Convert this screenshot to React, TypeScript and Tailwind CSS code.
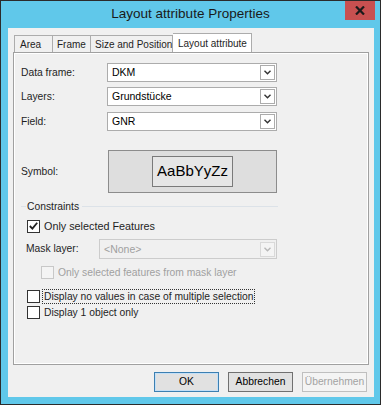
import React from 'react';

const font = { fontFamily: '"Liberation Sans", Arial, sans-serif' };

function Combo({ value, disabled, className }: { value: string; disabled?: boolean; className: string }) {
  return (
    <div
      className={`flex items-center justify-between border ${
        disabled ? 'border-[#cccccc] bg-[#f0f0f0] text-[#a0a0a0]' : 'border-[#acacac] bg-white text-black'
      } ${className}`}
    >
      <span className="pl-[4px] text-[10.5px] leading-none">{value}</span>
      <div
        className={`mr-[1px] flex h-[15px] w-[15px] items-center justify-center border ${
          disabled ? 'border-[#d9d9d9] bg-[#f4f4f4]' : 'border-[#acacac] bg-white'
        }`}
      >
        <svg width="7" height="5" viewBox="0 0 7 5">
          <path d="M0.5 0.8 L3.5 3.8 L6.5 0.8" fill="none" stroke={disabled ? '#b8b8b8' : '#333333'} strokeWidth="1.4" />
        </svg>
      </div>
    </div>
  );
}

function Check({ checked, disabled }: { checked?: boolean; disabled?: boolean }) {
  return (
    <div
      className={`flex h-[13px] w-[13px] shrink-0 items-center justify-center border ${
        disabled ? 'border-[#c8c8c8] bg-[#f4f4f4]' : 'border-[#333333] bg-white'
      }`}
    >
      {checked && (
        <svg width="9" height="8" viewBox="0 0 9 8">
          <path d="M0.8 4 L3.4 6.6 L8.2 0.8" fill="none" stroke="#222222" strokeWidth="1.8" />
        </svg>
      )}
    </div>
  );
}

export default function App() {
  return (
    <div style={font} className="h-[405px] w-[381px] border border-[#2b2b2b] bg-[#60c8ea] text-[#1e1e1e]">
      {/* title bar */}
      <div className="relative flex h-[27px] items-center justify-center">
        <span className="text-[13.5px] text-[#1a1a1a]">Layout attribute Properties</span>
        <div className="absolute right-[5px] top-0 flex h-[19px] w-[30px] items-center justify-center bg-[#c75050]">
          <svg width="10" height="9" viewBox="0 0 10 9">
            <path d="M1 0.5 L9 8.5 M9 0.5 L1 8.5" stroke="#1a1a1a" strokeWidth="2.2" />
          </svg>
        </div>
      </div>

      {/* client */}
      <div className="ml-[7px] flex h-[369px] w-[366px] flex-col bg-[#f0f0f0] pl-[5px] pr-[6px]">
        {/* tabs */}
        <div className="mt-[5px] flex h-[19px] items-end whitespace-nowrap pl-[1px] text-[10px]">
          <div className="flex h-[17px] w-[39px] items-center border border-b-0 border-[#acacac] bg-[#f0f0f0] pl-[5px]">Area</div>
          <div className="flex h-[17px] w-[38px] items-center border border-b-0 border-l-0 border-[#acacac] bg-[#f0f0f0] pl-[4px]">Frame</div>
          <div className="flex h-[17px] w-[82px] items-center border border-b-0 border-l-0 border-[#acacac] bg-[#f0f0f0] pl-[4px]">Size and Position</div>
          <div className="relative -mb-[1px] flex h-[20px] w-[79px] items-center border border-b-0 border-l-0 border-[#acacac] bg-white pb-[1px] pl-[5px]">
            Layout attribute
          </div>
        </div>

        {/* panel */}
        <div className="relative h-[313px] w-[356px] border border-[#a0a0a0] bg-[#f0f0f0] text-[10.3px] shadow-[inset_1px_1px_0_#ffffff,inset_-1px_-1px_0_#ffffff]">
          <div className="flex flex-col pl-[7px]">
            <div className="mt-[10px] flex h-[19px] items-center">
              <span className="w-[86px]">Data frame:</span>
              <Combo value="DKM" className="h-[19px] w-[170px]" />
            </div>
            <div className="mt-[5px] flex h-[19px] items-center">
              <span className="w-[86px]">Layers:</span>
              <Combo value="Grundstücke" className="h-[19px] w-[170px]" />
            </div>
            <div className="mt-[6px] flex h-[19px] items-center">
              <span className="w-[86px]">Field:</span>
              <Combo value="GNR" className="h-[19px] w-[170px]" />
            </div>

            <div className="mt-[19px] flex h-[43px] items-center">
              <span className="w-[87px]">Symbol:</span>
              <div className="flex h-[43px] w-[169px] items-center justify-center border border-[#8c8c8c] bg-[#dedede]">
                <div className="flex h-[31px] w-[81px] items-center justify-center border border-[#7a7a7a] bg-[#e6e6e6] text-[15px] text-black">
                  AaBbYyZz
                </div>
              </div>
            </div>

            {/* constraints group */}
            <div className="mt-[7px] flex h-[13px] items-center">
              <div className="h-px w-[5px] bg-[#dce2e8]" />
              <span className="px-[1px]">Constraints</span>
              <div className="ml-[2px] h-px w-[196px] bg-[#dce2e8]" />
            </div>
            <div className="mt-[6px] flex h-[14px] items-center pl-[6px]">
              <Check checked />
              <span className="ml-[4px] text-[10.8px]">Only selected Features</span>
            </div>
            <div className="mt-[6px] flex h-[20px] items-center pl-[5px]">
              <span className="w-[73px]">Mask layer:</span>
              <Combo value="<None>" disabled className="h-[20px] w-[178px]" />
            </div>
            <div className="mt-[7px] flex h-[13px] items-center pl-[20px]">
              <Check disabled />
              <span className="ml-[4px] text-[#a0a0a0]">Only selected features from mask layer</span>
            </div>
            <div className="mt-[10px] flex h-[15px] items-center pl-[6px]">
              <Check />
              <span className="ml-[2px] border border-dotted border-[#333333] px-[1px] leading-[13px]">
                Display no values in case of multiple selection
              </span>
            </div>
            <div className="mt-[2px] flex h-[13px] items-center pl-[6px]">
              <Check />
              <span className="ml-[4px]">Display 1 object only</span>
            </div>
          </div>
        </div>

        {/* buttons */}
        <div className="mt-[7px] flex justify-end gap-[9px] pr-[1px] text-[10.3px]">
          <button className="flex h-[20px] w-[65px] items-center justify-center border border-[#3c7fb1] bg-[#e1e1e1] text-black shadow-[inset_0_0_0_1px_#c4e0f7]">
            OK
          </button>
          <button className="flex h-[20px] w-[65px] items-center justify-center border border-[#707070] bg-[#e1e1e1] text-black">
            Abbrechen
          </button>
          <button className="flex h-[20px] w-[65px] items-center justify-center border border-[#bfbfbf] bg-[#f4f4f4] text-[#a3a3a3]">
            Übernehmen
          </button>
        </div>
      </div>
    </div>
  );
}
